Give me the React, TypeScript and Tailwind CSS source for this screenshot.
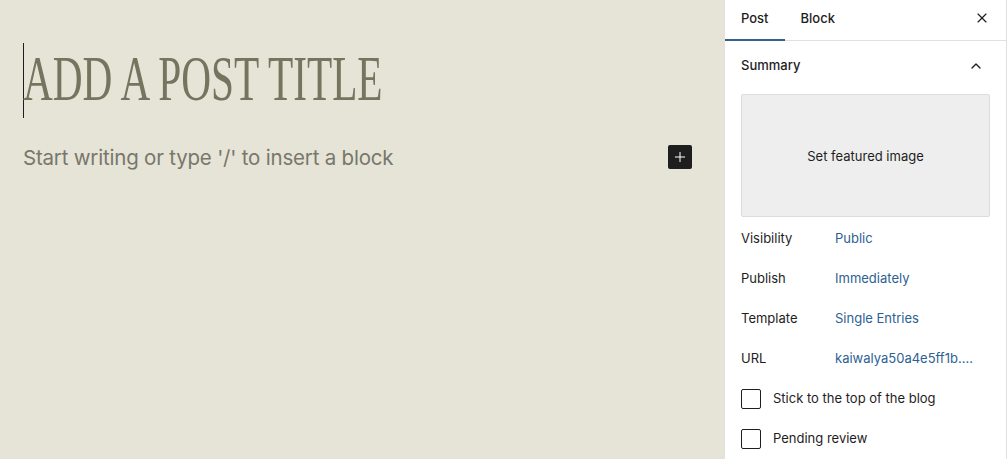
import { X, ChevronUp, Plus } from 'lucide-react'

const rows = [
  { label: 'Visibility', value: 'Public' },
  { label: 'Publish', value: 'Immediately' },
  { label: 'Template', value: 'Single Entries' },
  { label: 'URL', value: 'kaiwalya50a4e5ff1b....' },
]

function Checkbox({ label }: { label: string }) {
  return (
    <div className="flex h-10 items-center gap-3">
      <span className="h-5 w-5 rounded-[2px] border border-[#1e1e1e] bg-white" />
      <span>{label}</span>
    </div>
  )
}

export default function App() {
  return (
    <div className="flex h-[459px] w-[1007px] overflow-hidden bg-white font-['Inter',sans-serif] text-[13px] text-[#1e1e1e]">
      {/* Canvas */}
      <main className="flex-1 bg-[#e6e4d7]">
        <div className="relative pt-[42px] pl-[23px]">
          <span className="absolute left-[23px] top-[43px] h-[75px] w-px bg-[#1e1e1e]" />
          <h1 className="origin-left scale-x-[0.655] whitespace-nowrap font-['Liberation_Serif',serif] text-[63px] leading-[75px] text-[#75745f]">
            ADD A POST TITLE
          </h1>
        </div>
        <div className="mt-[26px] flex items-center justify-between pl-[23px] pr-[32px]">
          <p className="font-['Inter',sans-serif] text-[20.5px] tracking-[-0.2px] text-[#78776b]">
            Start writing or type '/' to insert a block
          </p>
          <button className="-mt-[3px] flex h-6 w-6 items-center justify-center rounded-[2px] bg-[#1e1e1e] text-white">
            <Plus size={16} strokeWidth={1.5} />
          </button>
        </div>
      </main>

      {/* Sidebar */}
      <aside className="flex w-[283px] flex-col border-l border-r border-[#e0e0e0] bg-white">
        <div className="flex h-[41px] items-stretch border-b border-[#e0e0e0]">
          <button className="relative px-4 pb-[3px] font-medium">
            Post
            <span className="absolute bottom-[-1px] left-0 right-0 h-[2px] bg-[#32628d]" />
          </button>
          <button className="px-4 pb-[3px] font-medium">Block</button>
          <button className="ml-auto flex w-12 items-center justify-center pb-[5px]">
            <X size={16} strokeWidth={1.75} />
          </button>
        </div>

        <div className="flex h-12 items-center justify-between pl-4 pr-[22px] pt-px font-medium">
          <span>Summary</span>
          <ChevronUp size={16} strokeWidth={2} />
        </div>

        <div className="px-4">
          <div className="mt-[5px] flex h-[123px] items-center justify-center rounded-[2px] border border-[#dcdcdc] bg-[#eeeeee] pt-[2px]">
            Set featured image
          </div>
          <div className="mt-[2px]">
            {rows.map((r) => (
              <div key={r.label} className="flex h-10 items-center">
                <span className="w-[94px]">{r.label}</span>
                <span className="text-[#2d6193]">{r.value}</span>
              </div>
            ))}
            <Checkbox label="Stick to the top of the blog" />
            <Checkbox label="Pending review" />
          </div>
        </div>
      </aside>
    </div>
  )
}
